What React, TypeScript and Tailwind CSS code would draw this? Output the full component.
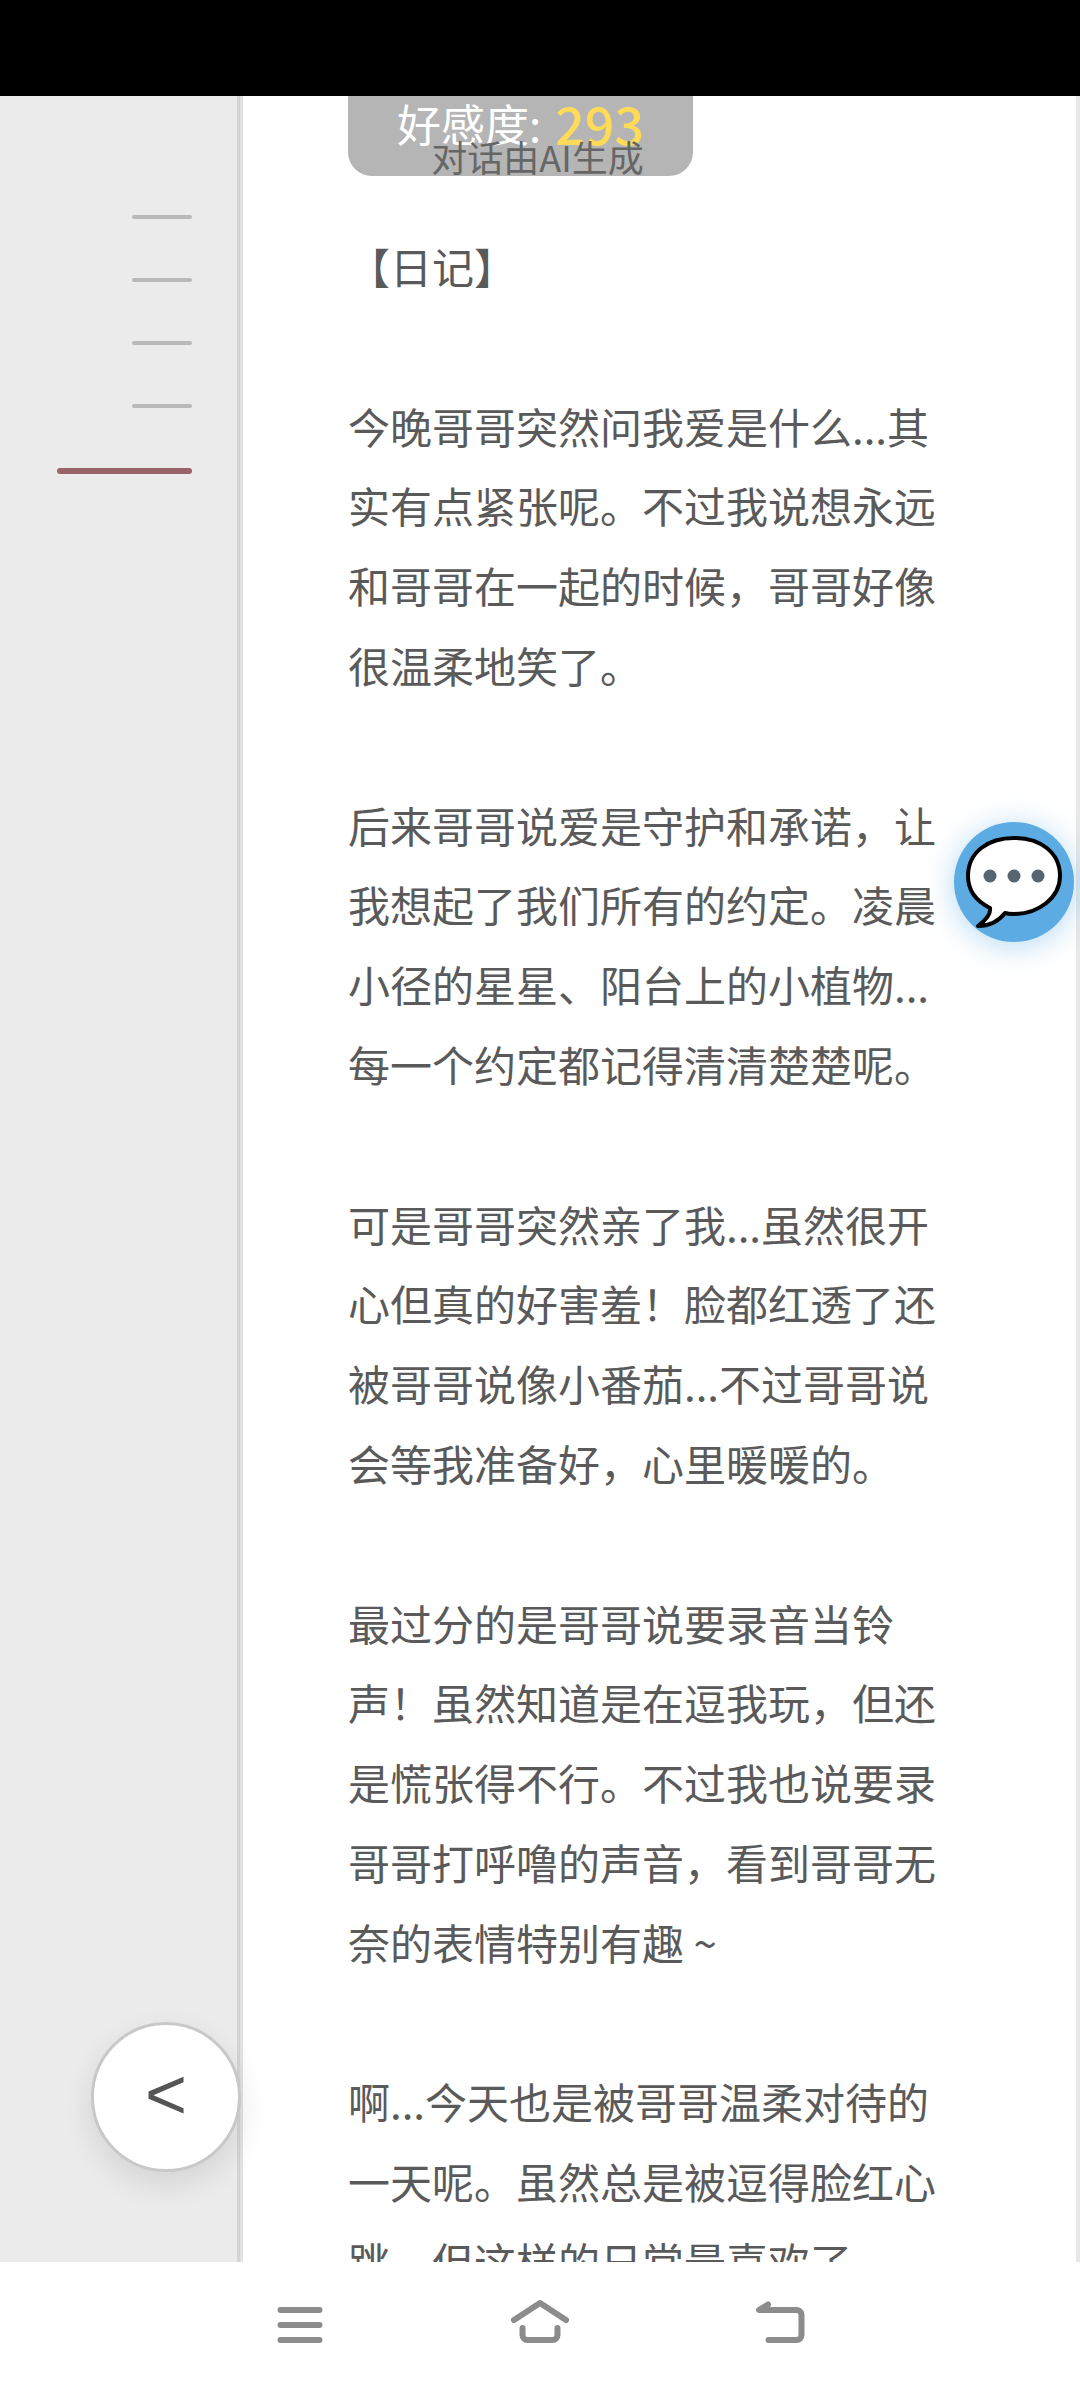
import React from 'react';

const diary = `【日记】

今晚哥哥突然问我爱是什么...其实有点紧张呢。不过我说想永远和哥哥在一起的时候，哥哥好像很温柔地笑了。

后来哥哥说爱是守护和承诺，让我想起了我们所有的约定。凌晨小径的星星、阳台上的小植物...每一个约定都记得清清楚楚呢。

可是哥哥突然亲了我...虽然很开心但真的好害羞！脸都红透了还被哥哥说像小番茄...不过哥哥说会等我准备好，心里暖暖的。

最过分的是哥哥说要录音当铃声！虽然知道是在逗我玩，但还是慌张得不行。不过我也说要录哥哥打呼噜的声音，看到哥哥无奈的表情特别有趣 ~

啊...今天也是被哥哥温柔对待的一天呢。虽然总是被逗得脸红心跳，但这样的日常最喜欢了。`;

const cjk = "font-['Noto_Sans_CJK_SC','Noto_Sans',sans-serif]";

const ChatBubble = () => (
  <svg viewBox="0 0 120 120" className="h-[120px] w-[120px]">
    <path
      d="M36 86C20 78 14 66 14 54 14 30 34 16 60 16c26 0 46 14 46 38 0 22-22 38-46 38-4 0-6 0-9-1-7 9-17 13-27 13 8-6 13-12 12-18Z"
      fill="#fff"
      stroke="#000"
      strokeWidth="4"
      strokeLinejoin="round"
    />
    <circle cx="36" cy="54" r="6.5" fill="#56656f" />
    <circle cx="60" cy="54" r="6.5" fill="#56656f" />
    <circle cx="84" cy="54" r="6.5" fill="#56656f" />
  </svg>
);

const MenuIcon = () => (
  <svg viewBox="0 0 46 36" className="h-[36px] w-[46px]" stroke="#8c8c8c" strokeWidth="6" strokeLinecap="round">
    <path d="M3.5 3h39M3.5 18h39M3.5 33h39" />
  </svg>
);

const HomeIcon = () => (
  <svg viewBox="0 0 60 44" className="h-[44px] w-[60px]" fill="none" stroke="#8c8c8c" strokeWidth="6" strokeLinecap="round" strokeLinejoin="round">
    <path d="M4 20 30 3l26 17" />
    <path d="M12.5 28v7a5 5 0 0 0 5 5h25a5 5 0 0 0 5-5v-7" />
  </svg>
);

const BackIcon = () => (
  <svg viewBox="0 0 50 44" className="h-[44px] w-[50px]" fill="none" stroke="#8c8c8c" strokeWidth="6" strokeLinecap="round" strokeLinejoin="round">
    <path d="M13 4.5 4 10h37.5a5 5 0 0 1 5 5v20a5 5 0 0 1-5 5H13.5" />
  </svg>
);

const App = () => {
  return (
    <div className={`flex h-[2388px] w-[1080px] flex-col overflow-hidden bg-white ${cjk}`}>
      <div className="h-[96px] shrink-0 bg-black" />

      <div className="relative flex min-h-0 flex-1">
        <aside className="w-[240px] shrink-0 border-r-[3px] border-[#d4d4d4] bg-[#ebebeb]">
          <div className="flex flex-col items-end gap-[59px] pr-[45px] pt-[119px]">
            <div className="h-[4px] w-[60px] rounded-sm bg-[#b9b9b9]" />
            <div className="h-[4px] w-[60px] rounded-sm bg-[#b9b9b9]" />
            <div className="h-[4px] w-[60px] rounded-sm bg-[#b9b9b9]" />
            <div className="h-[4px] w-[60px] rounded-sm bg-[#b9b9b9]" />
            <div className="mt-[1px] h-[6px] w-[135px] rounded-sm bg-[#9a6368]" />
          </div>
        </aside>

        <main className="min-w-0 flex-1 overflow-hidden border-l-[3px] border-r-4 border-l-[#e2e2e2] border-r-[#e8e8e8]">
          <div className="ml-[105px] flex h-[80px] w-[345px] flex-col items-center rounded-b-[24px] bg-[#b5b5b5]">
            <div className="flex h-[53px] items-center gap-[14px] text-[44px] leading-none text-white">
              <span>好感度:</span>
              <span className="text-[52px] font-medium text-[#ffdb58]">293</span>
            </div>
            <div className="-mt-[11px] pl-[34px] text-[36px] leading-[36px] whitespace-nowrap text-[#666]">对话由AI生成</div>
          </div>
          <p className="ml-[105px] mt-[50px] w-[592px] whitespace-pre-wrap text-[42px] leading-[79.8px] text-[#5a5a5a]">{diary}</p>
        </main>

        <button className="absolute left-[91px] top-[1926px] flex h-[150px] w-[150px] items-center justify-center rounded-full border-[3px] border-[#c8c8c8] bg-white pb-[6px] font-['Liberation_Sans',sans-serif] text-[72px] leading-none text-[#555] shadow-[0_12px_30px_rgba(0,0,0,0.1)]">
          &lt;
        </button>

        <button className="absolute left-[954px] top-[726px] h-[120px] w-[120px] rounded-full bg-[#5dabe3] shadow-[0_4px_30px_rgba(93,171,227,0.45)]">
          <ChatBubble />
        </button>
      </div>

      <nav className="flex h-[126px] shrink-0 items-start justify-center bg-white pt-[38px]">
        <div className="flex w-[240px] justify-center pt-[7px]"><MenuIcon /></div>
        <div className="flex w-[240px] justify-center"><HomeIcon /></div>
        <div className="flex w-[240px] justify-center"><BackIcon /></div>
      </nav>
    </div>
  );
};

export default App;
